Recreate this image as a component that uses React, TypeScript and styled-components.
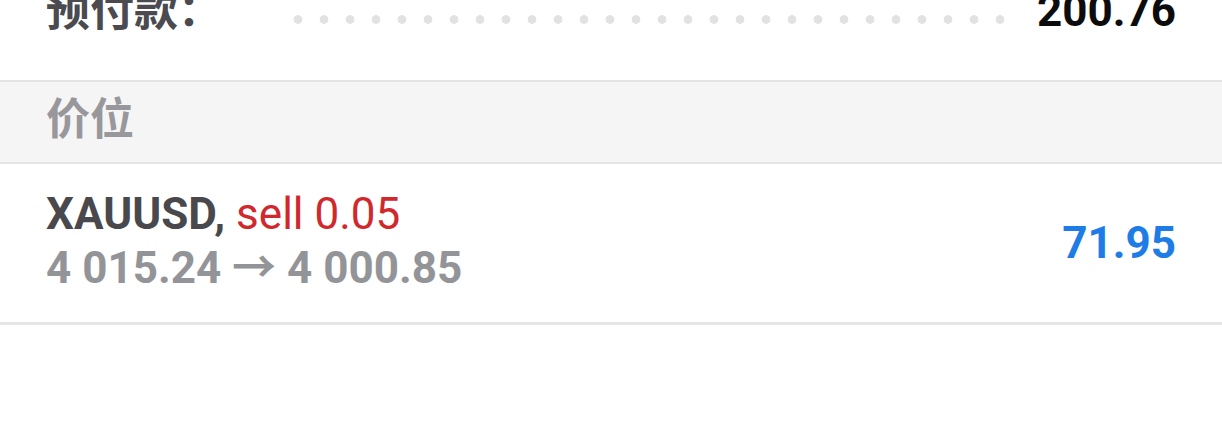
import React from 'react';
import styled, { createGlobalStyle } from 'styled-components';

const GlobalStyle = createGlobalStyle`
  html, body {
    margin: 0;
    padding: 0;
    background: #ffffff;
    overflow: hidden;
  }
  body {
    font-family: Roboto, "Noto Sans CJK SC", sans-serif;
  }
`;

const Page = styled.div`
  width: 1222px;
  height: 432px;
  overflow: hidden;
  background: #ffffff;
`;

// the list is scrolled, so the summary row is partly above the top edge
const Shifted = styled.div`
  display: flex;
  flex-direction: column;
  margin-top: -58px;
`;

const SummaryRow = styled.div`
  display: flex;
  align-items: center;
  height: 138px;
  padding: 0 46px;
  border-bottom: 2px solid #e4e4e4;
`;

const SummaryLabel = styled.span`
  font-size: 44px;
  font-weight: 700;
  color: #4a4a4f;
  line-height: 1;
`;

const Leader = styled.div`
  width: 728px;
  height: 9px;
  margin: 16px 0 0 auto;
  background-image: radial-gradient(circle, #e2e2e2 4px, transparent 4.7px);
  background-size: 26px 9px;
  background-repeat: repeat-x;
`;

const SummaryValue = styled.span`
  font-size: 44px;
  font-weight: 700;
  color: #0c0c0c;
  line-height: 1;
  margin-left: 24px;
`;

const SectionHeader = styled.div`
  display: flex;
  align-items: center;
  height: 82px;
  box-sizing: border-box;
  padding: 0 46px 12px;
  background: #f5f5f5;
  border-bottom: 2px solid #e4e4e4;
  font-size: 44px;
  font-weight: 700;
  color: #98989c;
`;

const PositionRow = styled.div`
  display: flex;
  align-items: center;
  justify-content: space-between;
  height: 158px;
  padding: 0 46px;
  border-bottom: 3px solid #e6e6e6;
`;

const PositionInfo = styled.div`
  display: flex;
  flex-direction: column;
  gap: 2px;
  margin-top: -4px;
`;

const SymbolLine = styled.div`
  font-size: 44px;
  line-height: 52px;
  font-weight: 700;
  color: #48484d;
`;

const TradeType = styled.span<{ $side: 'buy' | 'sell' }>`
  font-weight: 400;
  color: ${(p) => (p.$side === 'sell' ? '#d0282c' : '#1e7ce6')};
`;

const PriceLine = styled.div`
  font-size: 44px;
  line-height: 52px;
  font-weight: 700;
  color: #939498;
`;

const Profit = styled.span<{ $negative?: boolean }>`
  font-size: 44px;
  font-weight: 700;
  color: ${(p) => (p.$negative ? '#d0282c' : '#1e7ce6')};
`;

export default function App() {
  return (
    <Page>
      <GlobalStyle />
      <Shifted>
        <SummaryRow>
          <SummaryLabel>预付款：</SummaryLabel>
          <Leader />
          <SummaryValue>200.76</SummaryValue>
        </SummaryRow>
        <SectionHeader>价位</SectionHeader>
        <PositionRow>
          <PositionInfo>
            <SymbolLine>
              XAUUSD, <TradeType $side="sell">sell 0.05</TradeType>
            </SymbolLine>
            <PriceLine>4 015.24 → 4 000.85</PriceLine>
          </PositionInfo>
          <Profit>71.95</Profit>
        </PositionRow>
      </Shifted>
    </Page>
  );
}
